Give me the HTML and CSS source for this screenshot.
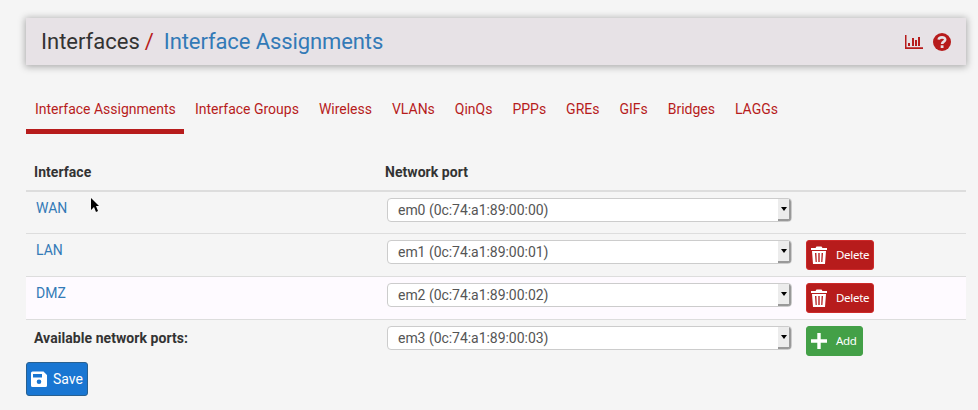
FILE: index.html
```html
<!DOCTYPE html>
<html lang="en">
<head>
<meta charset="utf-8">
<title>Interface Assignments</title>
<link rel="stylesheet" href="styles.css">
</head>
<body>
<svg class="sprite" aria-hidden="true">
  <symbol id="trash" viewBox="0 0 16 18"><path fill="currentColor" fill-rule="evenodd" d="M0 2h4.500L5.500 .5h5L11.500 2H16v2H0zM1 5h14l-1 13H2zM4 7l.6 9h1.200L5.400 7zM7.300 7v9h1.400V7zM10.600 7l-.4 9h1.200l.6-9z"/></symbol>
</svg>
<header class="panel">
  <h1 class="crumbs"><span>Interfaces</span><span class="slash">/</span><a class="current">Interface Assignments</a></h1>
  <div class="tools">
    <svg width="18" height="14" viewBox="0 0 18 14"><path fill="currentColor" d="M0 0h1.500v12.300H18V14H0zM3 8h2v3H3zM7 3h2v8H7zM10 5h2v6h-2zM13 2h2v9h-2z"/></svg>
    <svg width="18" height="18" viewBox="0 0 18 18"><circle cx="9" cy="9" r="9" fill="currentColor"/><path d="M5.700 6.700C5.900 3.700 12.200 3.500 12.200 6.700 12.200 8.700 9.200 8.600 9.100 11" fill="none" stroke="#e7e2e6" stroke-width="2.600"/><path fill="#e7e2e6" d="M7.700 12.300h2.800v2.700H7.700z"/></svg>
  </div>
</header>
<nav class="tabs">
  <a class="active">Interface Assignments</a><a>Interface Groups</a><a>Wireless</a><a>VLANs</a><a>QinQs</a><a>PPPs</a><a>GREs</a><a>GIFs</a><a>Bridges</a><a>LAGGs</a>
</nav>
<main class="table">
  <div class="row head"><b>Interface</b><b>Network port</b></div>
  <div class="row">
    <a class="name">WAN</a>
    <div class="select"><span>em0 (0c:74:a1:89:00:00)</span><i class="arrow"></i></div>
  </div>
  <div class="row">
    <a class="name">LAN</a>
    <div class="select"><span>em1 (0c:74:a1:89:00:01)</span><i class="arrow"></i></div>
    <button class="btn delete"><svg width="16" height="18"><use href="#trash"/></svg>Delete</button>
  </div>
  <div class="row hover">
    <a class="name">DMZ</a>
    <div class="select"><span>em2 (0c:74:a1:89:00:02)</span><i class="arrow"></i></div>
    <button class="btn delete"><svg width="16" height="18"><use href="#trash"/></svg>Delete</button>
  </div>
  <div class="row last">
    <b class="ports">Available network ports:</b>
    <div class="select"><span>em3 (0c:74:a1:89:00:03)</span><i class="arrow"></i></div>
    <button class="btn add"><svg width="16" height="16" viewBox="0 0 16 16"><path d="M8 0v16M0 8h16" stroke="currentColor" stroke-width="3.400"/></svg>Add</button>
  </div>
</main>
<button class="save"><svg width="16" height="16" viewBox="0 0 16 16"><path fill="currentColor" fill-rule="evenodd" d="M1.500 .5h11L16 4v10.500a1.500 1.500 0 0 1-1.500 1.500h-13a1.500 1.500 0 0 1-1.500-1.500V2a1.500 1.500 0 0 1 1.500-1.500zM2 3v3.500h9V3zM8 8.500a2.300 2.300 0 1 0 0 4.600 2.300 2.300 0 0 0 0-4.600z"/></svg>Save</button>
<svg class="cursor" width="9" height="15" viewBox="0 0 9 15"><path d="M0 0l8 8H5l2 5-2 1-2-5-3 3z"/></svg>
</body>
</html>
```
FILE: styles.css
```css
* { box-sizing: border-box; }
body {
  margin: 0;
  padding: 18px 12px 0 26px;
  height: 410px;
  overflow: hidden;
  background: #f5f5f5;
  color: #333;
  font: 14px/20px Roboto, sans-serif;
}
svg { flex-shrink: 0; }
.sprite { position: absolute; width: 0; height: 0; }
.panel {
  display: flex;
  justify-content: space-between;
  align-items: center;
  height: 47px;
  padding: 0 15px;
  background: #e7e2e6;
  box-shadow: 0 1px 7px 1px rgba(0, 0, 0, .3);
}
.crumbs { display: flex; margin: 0; font-size: 22px; line-height: 26px; font-weight: 400; }
.slash { margin: 0 10px 0 5px; color: #b71c1c; }
.current { letter-spacing: -.1px; }
.current, .name { color: #337ab7; }
.tools { display: flex; align-items: center; gap: 10px; color: #b71c1c; }
.tabs { display: flex; gap: 2px; height: 69px; padding-top: 29px; }
.tabs a {
  height: 40px;
  padding: 5px 9px 0;
  color: #b71c1c;
  letter-spacing: -.01px;
  white-space: nowrap;
}
.tabs .active { width: 158px; border-bottom: 5px solid #b71c1c; }
.table { margin-top: 28px; }
.row {
  display: grid;
  grid-template-columns: 361px 404px 1fr;
  align-items: start;
  height: 43px;
  padding-top: 6px;
  border-bottom: 1px solid #ddd;
}
.head { height: 30px; padding: 0 0 0 8px; grid-template-columns: 351px 1fr; border-bottom-width: 2px; }
.head b { letter-spacing: .05px; }
.row:nth-child(2) { height: 42px; }
.hover { background: #fefaff; }
.row.last { height: 42px; border: 0; }
.name { padding: 0 0 0 10px; }
.ports { padding: 2px 0 0 8px; letter-spacing: .06px; }
.select {
  display: flex;
  justify-content: space-between;
  width: 405px;
  height: 24px;
  border: 1px solid #ccc;
  border-radius: 4px;
  background: #fff;
  color: #555;
  padding-left: 10px;
  line-height: 23px;
  letter-spacing: -.04px;
  overflow: hidden;
}
.arrow {
  display: flex;
  align-items: center;
  justify-content: center;
  width: 13px;
  background: #ececec;
  border-right: 2px solid #999;
  border-bottom: 2px solid #999;
}
.arrow::after { content: ""; border: 3px solid transparent; border-top: 4px solid #000; border-bottom: 0; }
.btn, .save {
  display: flex;
  align-items: center;
  border: 1px solid;
  border-radius: 3px;
  color: #fff;
}
.btn {
  justify-self: start;
  height: 30px;
  margin-left: 15px;
  padding: 0 4px;
  gap: 9px;
  font: 11.5px/18px "Noto Sans", sans-serif;
  letter-spacing: -.3px;
}
.delete { width: 68px; background: #b71c1c; border-color: #cd2929; }
.add { width: 57px; background: #43a047; border-color: #43a047; }
.save {
  width: 62px;
  height: 34px;
  padding: 0 4px;
  gap: 6px;
  font: 14px/20px Roboto, sans-serif;
  background: #1976d2;
  border-color: #286090;
}
.cursor { position: absolute; left: 91px; top: 198px; }
```
